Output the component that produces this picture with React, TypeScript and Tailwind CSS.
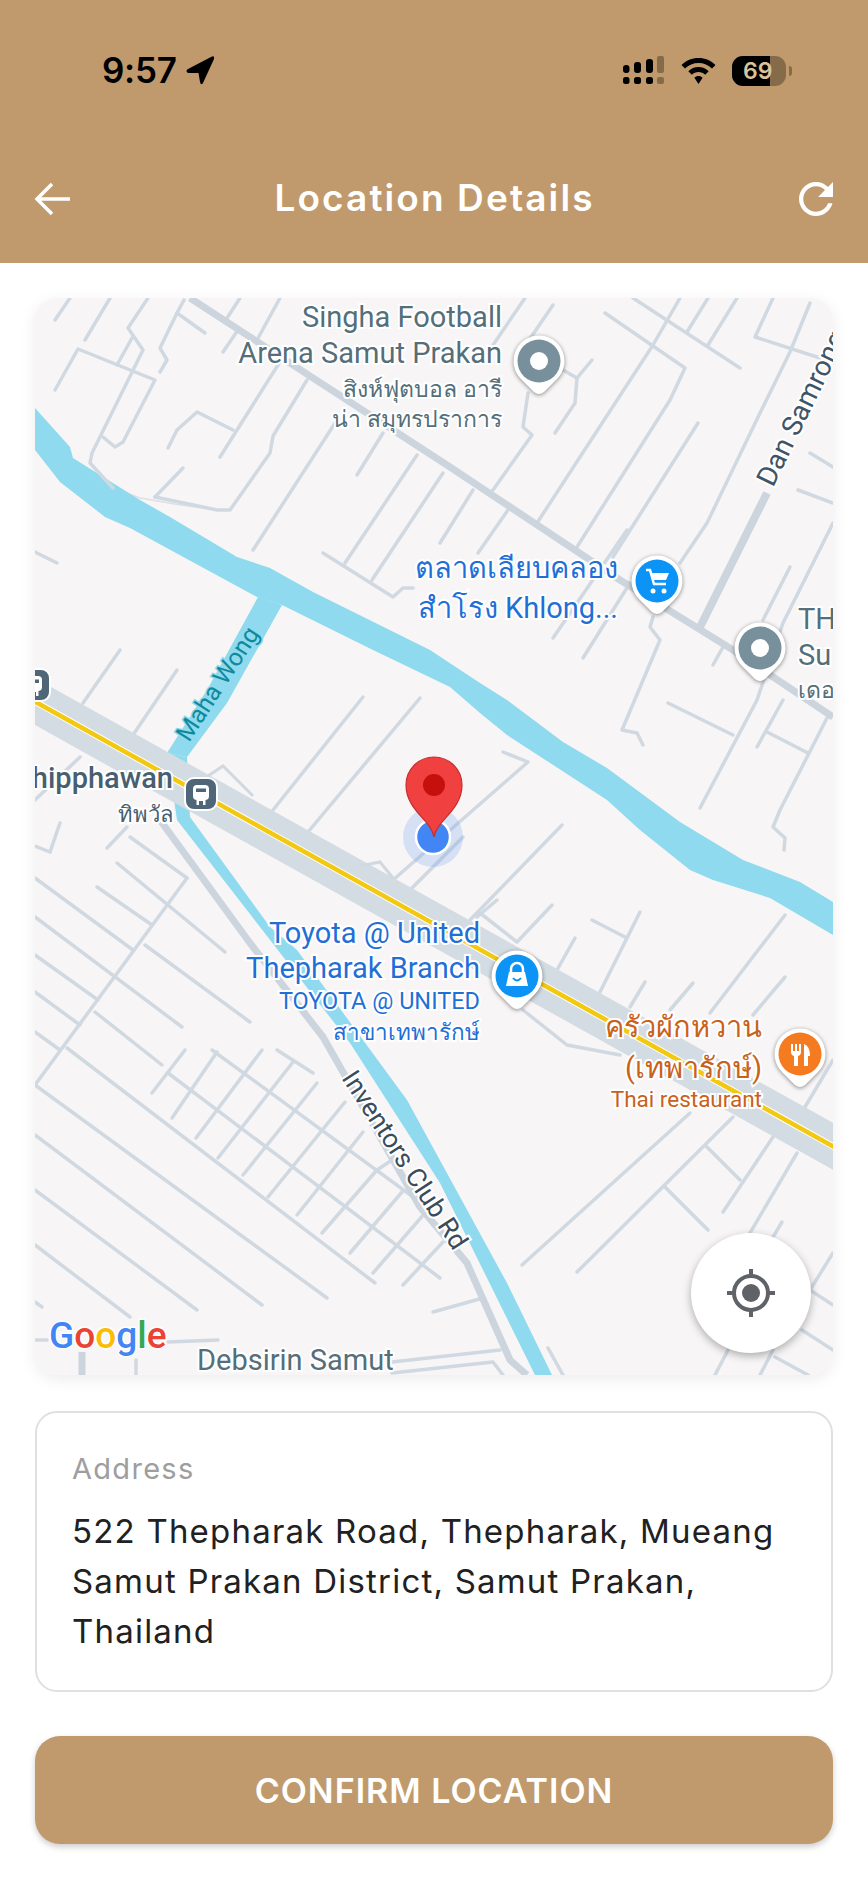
import React from "react";

// map coordinates are local to the 798x1077 map card
const streets = [
  "20,22 35,0", "50,42 75,0", "113,0 93,30 108,52 57,155 55,165 78,190",
  "20,92 43,51 120,82 88,144 80,149 68,139", "82,67 97,40",
  "125,74 132,62 125,50 142,15 170,35", "142,15 149,2", "188,54 203,32", "222,42 245,0", "192,20 205,0",
  "185,159 248,59", "133,150 142,132 162,114 198,132", "120,199 148,170",
  "120,199 182,212 195,212 235,155 238,138 272,82", "218,252 302,122", "322,177 348,135",
  "288,255 358,299 368,290 378,290", "310,265 382,157", "337,282 408,175", "0,254 22,265",
  "570,15 650,70 635,102 542,249", "645,0 618,47 502,225", "598,0 705,70", "673,0 652,34", "702,0 673,47",
  "738,0 720,39 785,60", "775,5 755,54 725,115 672,225 645,265", "663,125 578,259",
  "557,62 542,80 540,105 520,135", "528,72 542,80", "493,95 488,129 497,137 458,192",
  "518,7 492,45", "490,0 458,47", "438,192 405,245", "473,212 443,255", "518,340 592,232", "548,360 595,285",
  "618,319 615,329 625,342 587,432 602,435 608,447", "678,367 688,349", "755,269 728,322",
  "798,225 748,325 722,402 665,510", "775,155 798,169", "763,192 798,205", "633,405 698,437",
  "732,434 773,455", "748,402 722,449", "792,420 745,512 738,529 750,540 749,552",
  "48,405 85,352", "98,437 142,372", "238,512 328,399", "273,534 385,400",
  "468,454 493,464 358,582", "375,592 428,539", "527,527 435,622", "45,459 0,502", "72,550 92,529",
  "0,548 15,554", "15,554 25,525",
  "95,539 152,580", "82,565 190,654", "62,589 117,627", "0,580 98,652", "0,619 147,729", "110,647 215,724",
  "0,657 63,702", "60,714 127,767", "0,694 45,727", "0,734 25,752", "152,580 0,787",
  "32,750 340,985", "0,787 292,1000", "0,837 227,1007", "0,892 162,1012", "0,947 95,1019", "0,1004 7,1009",
  "242,752 278,775", "177,752 385,904", "133,775 405,980",
  "117,795 150,752", "137,820 182,754", "161,840 227,752", "183,860 258,764", "208,877 282,785",
  "233,899 310,804", "262,917 328,834", "287,935 342,872 357,862", "315,955 367,894", "338,975 390,915", "368,987 408,944",
  "398,1014 448,1000", "133,1044 183,1042", "0,1042 12,1042", "101,1062 101,1077",
  "357,1064 465,1052", "357,1075 458,1064 468,1077",
  "517,607 482,644 445,615", "462,602 442,619", "540,640 522,672", "605,614 565,694", "557,622 590,639",
  "610,684 595,709", "658,685 635,712", "750,617 675,715", "750,679 718,717", "488,712 532,747 585,757",
  "655,815 487,967", "698,819 542,974", "672,849 705,882", "738,839 688,914", "630,889 673,932",
  "762,855 715,935", "747,924 738,939", "798,955 775,992 798,1007", "767,1032 798,1052", "738,1052 725,1077",
  "740,1059 773,1077", "693,1052 680,1077", "513,1050 528,1077", "798,762 770,809",
];

function Pin({ x, y, color, children }: { x: number; y: number; color: string; children: React.ReactNode }) {
  return (
    <g transform={`translate(${x} ${y})`}>
      <path
        d="M0 -25.5A25.5 25.5 0 0 1 18 18L5 31Q0 35 -5 31L-18 18A25.5 25.5 0 0 1 0 -25.5Z"
        fill="#fff"
        className="drop-shadow-[0_1px_2px_rgba(0,0,0,0.45)]"
      />
      <circle r="21.5" fill={color} />
      {children}
    </g>
  );
}

function BusIcon({ x, y }: { x: number; y: number }) {
  return (
    <g transform={`translate(${x} ${y})`}>
      <rect x="-16" y="-16" width="32" height="32" rx="9" fill="#4f6678" stroke="#fff" strokeWidth="2" />
      <rect x="-8" y="-9" width="16" height="15" rx="4" fill="#fff" />
      <rect x="-5" y="-5.500" width="10" height="3.500" fill="#4f6678" />
      <path d="M-4.500 6V11H4.500V6Z" fill="#fff" />
      <rect x="-2" y="7" width="4" height="4" fill="#4f6678" />
    </g>
  );
}

function Label({ x, y, anchor = "end", className, children }: { x: number; y: number; anchor?: "start" | "end"; className?: string; children: React.ReactNode }) {
  return (
    <text x={x} y={y} textAnchor={anchor} className={`stroke-white stroke-[4px] [paint-order:stroke] ${className ?? ""}`}>
      {children}
    </text>
  );
}

function MapView() {
  return (
    <svg viewBox="0 0 798 1077" className="block h-full w-full font-['Roboto','Noto_Sans',sans-serif]">
      <rect width="798" height="1077" fill="#f7f5f5" />

      {/* thin footpath along the river */}
      <path d="M55 165L78 190L105 200L140 206L182 212" fill="none" stroke="#dcdfe3" strokeWidth="1.500" />

      {/* river and canal */}
      <path
        fill="#8fdaee"
        d="M0 110L35 149L38 160L105 202L135 219L202 259L235 270L278 294L395 352L445 385L472 402L528 444L572 470L645 524L708 562L765 584L798 604V637L735 600L678 582L655 572L605 532L572 502L472 437L445 415L415 389L338 352L247 307L222 299L95 230L70 219L25 184L0 152Z"
      />
      <path fill="#8fdaee" d="M223 299L247 307L192 405L152 459L132 455L172 392Z" />
      <path
        fill="#8fdaee"
        d="M132 455L152 459L155 519L235 629L262 652L372 802L472 985L517 1077H500L405 885L315 745L142 522Z"
      />

      {/* streets */}
      <g fill="none" stroke="#d0d9e1" strokeWidth="3.500" strokeLinecap="round" strokeLinejoin="round">
        {streets.map((s) => (
          <polyline key={s} points={s} />
        ))}
      </g>
      <g fill="none" stroke="#ccd5dd" strokeLinecap="butt" strokeLinejoin="round">
        <polyline points="155,0 415,169 585,282 698,352 798,419" strokeWidth="7" />
        <polyline points="665,329 732,195" strokeWidth="8" />
        <polyline points="125,522 215,645 288,739 385,909 432,965 475,1062 492,1077" strokeWidth="7" />
        <polyline points="47,1054 47,1077" strokeWidth="7" />
      </g>

      {/* main road */}
      <line x1="-10" y1="398" x2="810" y2="855" stroke="#d3dce3" strokeWidth="41" />
      <line x1="-10" y1="398" x2="810" y2="855" stroke="#fff" strokeWidth="6.500" />
      <line x1="-10" y1="398" x2="810" y2="855" stroke="#f2c811" strokeWidth="4.500" />
      <path d="M170 480L188 468L218 498" fill="none" stroke="#d0d9e1" strokeWidth="3" />
      <path d="M325 568L345 564L358 580" fill="none" stroke="#d0d9e1" strokeWidth="3" />

      {/* labels */}
      <g className="fill-[#546e7a] text-[29px]">
        <Label x={467} y={29}>Singha Football</Label>
        <Label x={467} y={65}>Arena Samut Prakan</Label>
        <Label x={763} y={331} anchor="start">TH</Label>
        <Label x={763} y={367} anchor="start">Su</Label>
        <Label x={162} y={1072} anchor="start">Debsirin Samut</Label>
      </g>
      <g className="fill-[#546e7a] text-[23px]">
        <Label x={467} y={99}>สิงห์ฟุตบอล อารี</Label>
        <Label x={467} y={129}>น่า สมุทรปราการ</Label>
        <Label x={763} y={400} anchor="start">เดอ</Label>
      </g>
      <g className="fill-[#1f6fd6] text-[29px]">
        <Label x={583} y={280}>ตลาดเลียบคลอง</Label>
        <Label x={583} y={320}>สำโรง Khlong...</Label>
        <Label x={445} y={645}>Toyota @ United</Label>
        <Label x={445} y={680}>Thepharak Branch</Label>
      </g>
      <g className="fill-[#1f6fd6]">
        <Label x={445} y={711} className="text-[23.500px]">TOYOTA @ UNITED</Label>
        <Label x={445} y={742} className="text-[22.500px]">สาขาเทพารักษ์</Label>
      </g>
      <g className="fill-[#c9611b]">
        <Label x={727} y={739} className="text-[29px]">ครัวผักหวาน</Label>
        <Label x={727} y={780} className="text-[29px]">(เทพารักษ์)</Label>
        <Label x={727} y={809} className="text-[22.500px]">Thai restaurant</Label>
      </g>
      <g className="fill-[#475f70]">
        <Label x={138} y={490} className="text-[29px] font-medium">Thipphawan</Label>
        <Label x={138} y={524} className="text-[22px]">ทิพวัล</Label>
      </g>
      <text transform="translate(738 190) rotate(-64)" className="fill-[#3f5565] stroke-white stroke-[4px] text-[28px] [paint-order:stroke]">Dan Samrong</text>
      <text transform="translate(154 445) rotate(-57)" className="fill-[#0f8a9d] stroke-[#8fdaee] stroke-[3px] text-[24.500px] [paint-order:stroke]">Maha Wong</text>
      <text transform="translate(306 780) rotate(57)" className="fill-[#3a4c5a] stroke-white stroke-[4px] text-[26.500px] [paint-order:stroke]">Inventors Club Rd</text>

      {/* place pins */}
      <Pin x={504} y={63} color="#78909c">
        <circle r="9" fill="#fff" />
      </Pin>
      <Pin x={725} y={350} color="#78909c">
        <circle r="9" fill="#fff" />
      </Pin>
      <Pin x={622} y={283} color="#0b94f5">
        <path d="M-11 -11H-7L-3 3H9" fill="none" stroke="#fff" strokeWidth="2.500" />
        <path d="M-6 -8H12L9 -1H-4Z" fill="#fff" />
        <circle cx="-4" cy="10" r="2.500" fill="#fff" />
        <circle cx="7" cy="10" r="2.500" fill="#fff" />
      </Pin>
      <Pin x={482} y={678} color="#0b94f5">
        <path d="M-6 -3V-7A6 6 0 0 1 6 -7V-3" fill="none" stroke="#fff" strokeWidth="2.500" />
        <path d="M-8 -4H8L11 10H-11Z" fill="#fff" />
        <path d="M-4 2Q0 7 4 2" fill="none" stroke="#0b94f5" strokeWidth="2" />
      </Pin>
      <Pin x={765} y={756} color="#f57b20">
        <path d="M-9 -10V-2Q-9 1 -6 2V12H-2V2Q1 1 1 -2V-10H-1V-3H-3V-10H-5V-3H-7V-10Z" fill="#fff" />
        <path d="M4 12V-10Q10 -8 10 2H8V12Z" fill="#fff" />
      </Pin>
      <BusIcon x={166} y={496} />
      <BusIcon x={-1} y={387} />

      {/* current position and dropped marker */}
      <circle cx="398" cy="539" r="30" fill="#4285f4" fillOpacity="0.18" />
      <circle cx="398" cy="539" r="17" fill="#4285f4" stroke="#fff" strokeWidth="2.500" />
      <path
        d="M399 539C396 522 371 512 371 487A28 28 0 0 1 427 487C427 512 402 522 399 539Z"
        fill="#f04040"
        stroke="#c5302f"
        strokeWidth="1.200"
      />
      <circle cx="399" cy="487" r="11" fill="#c5100e" />

      {/* logo */}
      <text x="14" y="1050" className="stroke-white stroke-[3px] text-[37px] font-medium [paint-order:stroke]">
        <tspan fill="#4285f4">G</tspan>
        <tspan fill="#ea4335">o</tspan>
        <tspan fill="#fbbc05">o</tspan>
        <tspan fill="#4285f4">g</tspan>
        <tspan fill="#34a853">l</tspan>
        <tspan fill="#ea4335">e</tspan>
      </text>
    </svg>
  );
}

function StatusBar() {
  return (
    <div className="flex h-[29px] items-center justify-between pl-[102px] pr-[76px]">
      <div className="flex items-center gap-[9px]">
        <span className="text-[35px] leading-none font-semibold tracking-[-0.3px] text-black">9:57</span>
        <svg viewBox="0 0 28 29" className="h-[29px] w-[28px]">
          <path d="M25 1Q29 -1 28 3L17 27Q15 30 14 26L12.500 17H2Q-1 15 2 13Z" fill="#000" />
        </svg>
      </div>
      <div className="flex items-center">
        <svg viewBox="0 0 41 29" className="h-[29px] w-[41px]">
          <g fill="#000">
            <rect x="0" y="9" width="6.500" height="8" rx="3" />
            <rect x="11" y="6" width="7" height="11" rx="3" />
            <rect x="23" y="3" width="7" height="14" rx="3" />
            <rect x="0" y="21" width="6.500" height="7" rx="2.500" />
            <rect x="11" y="21" width="7" height="7" rx="2.500" />
            <rect x="23" y="21" width="7" height="7" rx="2.500" />
          </g>
          <g fill="#000" fillOpacity="0.3">
            <rect x="34" y="0" width="7" height="17" rx="2" />
            <rect x="34" y="21" width="7" height="7" rx="2" />
          </g>
        </svg>
        <svg viewBox="0 0 35 26" className="ml-[16px] h-[26px] w-[37px]">
          <path
            d="M17.500 0C11 0 5 2.500 0.500 7L4 10.500C7.500 7 12.300 5 17.500 5S27.500 7 31 10.500L34.500 7C30 2.500 24 0 17.500 0ZM17.500 9C13.700 9 10 10.500 7.300 13.200L10.800 16.700C12.600 15 15 14 17.500 14S22.400 15 24.200 16.700L27.700 13.200C25 10.500 21.300 9 17.500 9ZM17.500 18C15.900 18 14.500 18.600 13.400 19.700L17.500 26L21.600 19.700C20.500 18.600 19.100 18 17.500 18Z"
            fill="#000"
          />
        </svg>
        <div className="relative ml-[15px] h-[30px] w-[54px] overflow-hidden rounded-[11px] bg-black/30">
          <div className="h-full w-[38px] bg-black" />
          <span className="absolute top-[3px] left-[11px] text-[23px] leading-[24px] font-semibold text-[#dcc29c]">69</span>
        </div>
        <div className="ml-[3px] h-[10px] w-[3px] rounded-r-full bg-black/30" />
      </div>
    </div>
  );
}

export default function App() {
  return (
    <div className="min-h-[1887px] w-[868px] bg-white font-[Inter,sans-serif]">
      <header className="h-[263px] bg-[#c09a6c] pt-[56px]">
        <StatusBar />
        <div className="mt-[97px] flex h-[34px] items-center justify-between pl-[34px] pr-[35px]">
          <svg viewBox="0 0 36 34" className="h-[34px] w-[36px]" fill="none" stroke="#fff" strokeWidth="3.500">
            <path d="M36 17H3M18 2L3 17L18 32" />
          </svg>
          <h1 className="mb-[4px] text-[37px] leading-none font-semibold tracking-[2.100px] text-white">Location Details</h1>
          <svg viewBox="4 4 16 16" className="h-[34px] w-[34px]" fill="#fff">
            <path d="M17.650 6.350C16.200 4.900 14.210 4 12 4c-4.420 0-7.990 3.580-7.990 8s3.570 8 7.990 8c3.730 0 6.840-2.550 7.730-6h-2.080c-.820 2.330-3.040 4-5.650 4-3.310 0-6-2.690-6-6s2.690-6 6-6c1.660 0 3.140.690 4.220 1.780L13 11h7V4l-2.350 2.350z" />
          </svg>
        </div>
      </header>

      <main className="px-[35px] pt-[35px]">
        <div className="relative h-[1077px] overflow-hidden rounded-[22px] shadow-[0_4px_16px_rgba(0,0,0,0.08)]">
          <MapView />
          <button className="absolute right-[22px] bottom-[22px] flex h-[120px] w-[120px] items-center justify-center rounded-full bg-white shadow-[0_3px_8px_rgba(0,0,0,0.3)]">
            <svg viewBox="0 0 48 48" className="h-[48px] w-[48px]">
              <circle cx="24" cy="24" r="17" fill="none" stroke="#5f6368" strokeWidth="4" />
              <circle cx="24" cy="24" r="9" fill="#5f6368" />
              <path d="M24 0V7M24 41V48M0 24H7M41 24H48" stroke="#5f6368" strokeWidth="4" />
            </svg>
          </button>
        </div>

        <section className="mt-[36px] h-[281px] rounded-[22px] border-2 border-[#e0e0e0] px-[35px] pt-[39px]">
          <p className="text-[29px] leading-[34px] tracking-[1.300px] text-[#9e9e9e]">Address</p>
          <p className="mt-[20px] text-[33px] leading-[50px] tracking-[1.200px] text-[#212121]">
            522 Thepharak Road, Thepharak, Mueang Samut Prakan District, Samut Prakan, Thailand
          </p>
        </section>

        <button className="mt-[44px] flex h-[108px] w-full items-center justify-center rounded-[25px] bg-[#c09a6c] text-[34px] font-semibold tracking-[1px] text-white shadow-[0_3px_6px_rgba(0,0,0,0.2)]">
          CONFIRM LOCATION
        </button>
      </main>
    </div>
  );
}
